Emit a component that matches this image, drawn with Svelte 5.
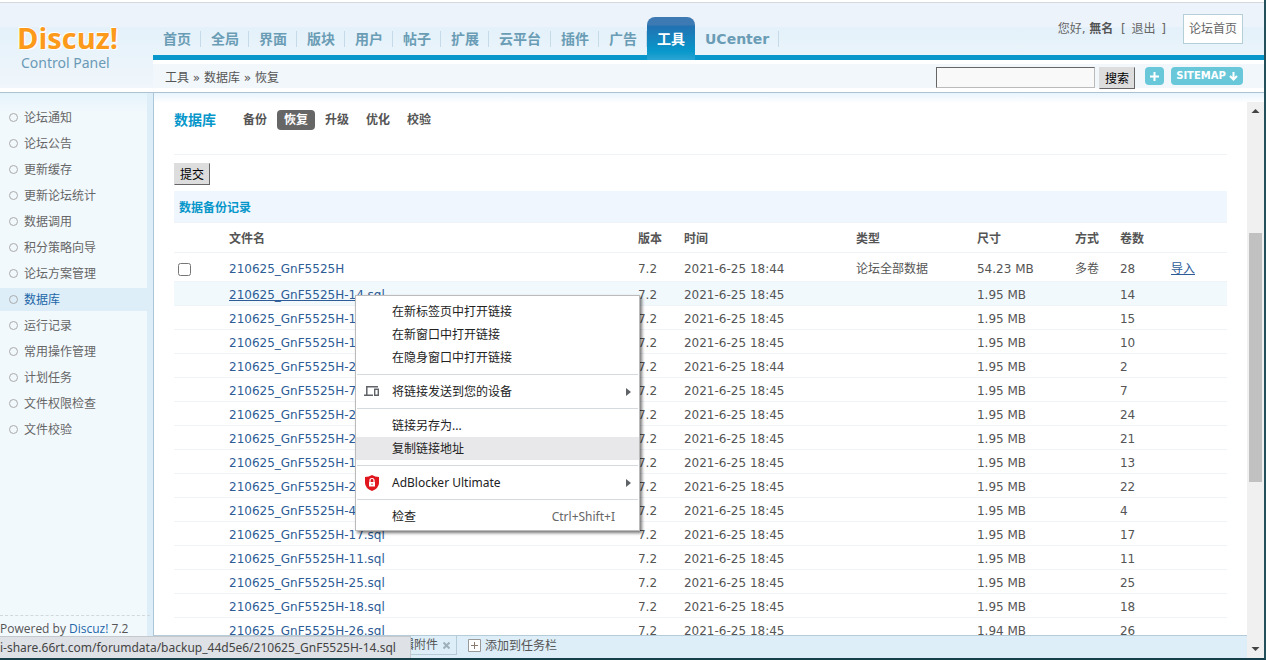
<script>
  const nav = ['首页', '全局', '界面', '版块', '用户', '帖子', '扩展', '云平台', '插件', '广告', '工具', 'UCenter'];
  const side = ['论坛通知', '论坛公告', '更新缓存', '更新论坛统计', '数据调用', '积分策略向导', '论坛方案管理', '数据库', '运行记录', '常用操作管理', '计划任务', '文件权限检查', '文件校验'];
  const tabs = ['备份', '恢复', '升级', '优化', '校验'];
  const rows = [
    [14, '45', '1.95'], [15, '45', '1.95'], [10, '45', '1.95'], [2, '44', '1.95'], [7, '45', '1.95'],
    [24, '45', '1.95'], [21, '45', '1.95'], [13, '45', '1.95'], [22, '45', '1.95'], [4, '45', '1.95'],
    [17, '45', '1.95'], [11, '45', '1.95'], [25, '45', '1.95'], [18, '45', '1.95'], [26, '45', '1.94']
  ];
</script>

<div class="page">
  <header class="top">
    <div class="logo">
      <strong>Discuz!</strong>
      <span>Control Panel</span>
    </div>
    <div class="head">
      <div class="navbar">
        <nav>
          {#each nav as n}<a href="#{n}" class:on={n === '工具'}>{n}</a>{/each}
        </nav>
        <div class="user">
          <p>您好, <b>無名</b> &nbsp;[ <a href="#logout">退出</a> ]</p>
          <a class="home" href="#home">论坛首页</a>
        </div>
      </div>
      <div class="crumbs">
        <p>工具 » 数据库 » 恢复</p>
        <form onsubmit={(e) => e.preventDefault()}>
          <input type="text" aria-label="搜索" />
          <button class="btn">搜索</button>
          <button class="pill plus" type="button" aria-label="添加">
            <svg width="9" height="9" viewBox="0 0 9 9"><path d="M4.500 0V9M0 4.500H9" stroke="#fff" stroke-width="2" /></svg>
          </button>
          <button class="pill map" type="button">SITEMAP
            <svg width="9" height="9" viewBox="0 0 9 9"><path d="M4.500 0V7M1 4L4.500 7.500L8 4" fill="none" stroke="#fff" stroke-width="2" /></svg>
          </button>
        </form>
      </div>
    </div>
  </header>

  <div class="body">
    <aside>
      <ul>
        {#each side as s}<li class:on={s === '数据库'}><a href="#{s}">{s}</a></li>{/each}
      </ul>
      <p class="power">Powered by <a href="#discuz">Discuz!</a> 7.2</p>
    </aside>
    <div class="right">
      <main>
        <div class="tabs">
          <h1>数据库</h1>
          {#each tabs as t}<a href="#{t}" class:on={t === '恢复'}>{t}</a>{/each}
        </div>
        <button class="btn submit">提交</button>
        <table>
          <colgroup>
            <col class="c-check" /><col /><col class="c-ver" /><col class="c-time" /><col class="c-type" />
            <col class="c-size" /><col class="c-way" /><col class="c-vol" /><col class="c-act" />
          </colgroup>
          <thead>
            <tr class="title"><th colspan="9">数据备份记录</th></tr>
            <tr class="cols"><th></th><th>文件名</th><th>版本</th><th>时间</th><th>类型</th><th>尺寸</th><th>方式</th><th>卷数</th><th></th></tr>
          </thead>
          <tbody>
            <tr class="first">
              <td><input type="checkbox" aria-label="210625_GnF5525H" /></td>
              <td><a href="#file">210625_GnF5525H</a></td><td>7.2</td><td>2021-6-25 18:44</td><td>论坛全部数据</td>
              <td>54.23 MB</td><td>多卷</td><td>28</td><td><a class="ul" href="#import">导入</a></td>
            </tr>
            {#each rows as [n, min, size], i}
              <tr class:hot={i === 0}>
                <td></td><td><a class:ul={i === 0} href="#{n}">210625_GnF5525H-{n}.sql</a></td><td>7.2</td>
                <td>2021-6-25 18:{min}</td><td></td><td>{size} MB</td><td></td><td>{n}</td><td></td>
              </tr>
            {/each}
          </tbody>
        </table>
      </main>
      <footer>
        <div class="task"><span>编辑附件</span><svg width="7" height="7" viewBox="0 0 7 7"><path d="M0.500 0.500L6.500 6.500M6.500 0.500L0.500 6.500" stroke="#9db0bb" stroke-width="2" /></svg></div>
        <a class="add" href="#add">
          <svg width="13" height="13" viewBox="0 0 13 13"><path d="M.5 .5H12.500V12.500H.5Z" fill="#fff" stroke="#999" /><path d="M6.500 3V10M3 6.500H10" stroke="#8a7a70" /></svg>
          添加到任务栏
        </a>
      </footer>
    </div>
    <div class="scroll">
      <svg width="17" height="17" viewBox="0 0 17 17"><path d="M4.500 11L8.500 7L12.500 11Z" fill="#444" /></svg>
      <div class="track"><i></i></div>
      <svg width="17" height="17" viewBox="0 0 17 17"><path d="M4.500 6L8.500 10L12.500 6Z" fill="#444" /></svg>
    </div>
  </div>

  <div class="menu" role="menu">
    <button role="menuitem">在新标签页中打开链接</button>
    <button role="menuitem">在新窗口中打开链接</button>
    <button role="menuitem">在隐身窗口中打开链接</button>
    <hr />
    <button role="menuitem">
      <svg class="ico" width="16" height="11" viewBox="0 0 16 11"><path d="M14 .8H2.800V8.500M0 9.300H9" fill="none" stroke="#5f6368" stroke-width="1.500" /><path d="M10.700 3.200H14.300V9.300H10.700Z" fill="none" stroke="#5f6368" stroke-width="1.400" /></svg>
      将链接发送到您的设备
      <svg class="arr" width="6" height="8" viewBox="0 0 6 8"><path d="M0 0L5 4L0 8Z" fill="#5f6368" /></svg>
    </button>
    <hr />
    <button role="menuitem">链接另存为...</button>
    <button role="menuitem" class="on">复制链接地址</button>
    <hr />
    <button role="menuitem">
      <svg class="ico" width="16" height="16" viewBox="0 0 16 16"><path d="M8 0Q11 2 15 2V8Q15 13 8 16Q1 13 1 8V2Q5 2 8 0Z" fill="#e0151e" /><path d="M5 7H11V11.500H5Z" fill="#fff" /><path d="M6 7V5.500Q6 3.500 8 3.500Q10 3.500 10 5.500V7" fill="none" stroke="#fff" stroke-width="1.200" /><path d="M8 8.500V10" stroke="#db1820" /></svg>
      AdBlocker Ultimate
      <svg class="arr" width="6" height="8" viewBox="0 0 6 8"><path d="M0 0L5 4L0 8Z" fill="#5f6368" /></svg>
    </button>
    <hr />
    <button role="menuitem">检查 <kbd>Ctrl+Shift+I</kbd></button>
  </div>
  <div class="status">i-share.66rt.com/forumdata/backup_44d5e6/210625_GnF5525H-14.sql</div>
</div>

<style>
  :global(*) { box-sizing: border-box; }
  :global(body) { margin: 0; overflow: hidden; }
  .page { position: relative; height: 100vh; display: flex; flex-direction: column; overflow: hidden; background: #fff; border-right: 2px solid #24505c; border-bottom: 2px solid #173f4a; font: 12px/18px "DejaVu Sans", "Noto Sans CJK SC", sans-serif; color: #555; }
  p, ul, h1 { margin: 0; padding: 0; }
  a { color: inherit; text-decoration: none; }
  .top { display: flex; flex: none; margin-top: 2px; border-top: 1px solid #d5d9dd; border-bottom: 1px solid #adc3d1; background: linear-gradient(#edf3fa 0 24px, #e4f1fa 24px, #f0f6fb 85px, #fff 85px); }
  .logo { width: 153px; flex: none; display: flex; flex-direction: column; align-items: flex-start; padding: 17px 0 0 17px; }
  .logo strong { font: bold 29px/35px "Open Sans", sans-serif; color: #fc9a1b; text-shadow: 0 0 2px #fff, 1px 1px 0 #fff, -1px -1px 0 #fff; }
  .logo span { padding-left: 4px; font: 14px/16px "Noto Sans", sans-serif; color: #6a9ab5; }
  .head { flex: 1; min-width: 0; }
  .navbar { display: flex; justify-content: space-between; height: 57px; border-bottom: 5px solid #0797ca; }
  nav { display: flex; height: 57px; padding-top: 14px; flex: none; }
  nav a { position: relative; height: 43px; padding: 0 10px; font-size: 14px; line-height: 44px; font-weight: bold; color: #6a9db5; }
  nav a::after { content: ""; position: absolute; right: 0; top: 14px; height: 16px; border-right: 1px solid #c6dbe8; }
  nav a.on { color: #fff; border-radius: 8px 8px 0 0; background: linear-gradient(#3d7ab4 0 8px, #2272b2 9px, #0797ca 34px, #2aa5d3); }
  nav a.on::after { display: none; }
  .user { display: flex; gap: 17px; padding: 11px 21px 0 0; color: #666; }
  .user p { line-height: 31px; white-space: nowrap; }
  .user b { color: #555; }
  .user p a { padding: 0 2px; }
  .home { height: 30px; padding: 0 5px; line-height: 29px; border: 1px solid #b5cfd9; background: #fff; }
  .crumbs { display: flex; justify-content: space-between; align-items: flex-start; height: 32px; padding: 0 21px 0 12px; border: solid #fff; border-width: 4px 0; background: #f2f7fb; }
  .crumbs p { line-height: 28px; }
  form { display: flex; align-items: flex-start; padding-top: 3px; }
  form input { width: 159px; height: 21px; border: 1px solid #bbb; border-top-color: #666; border-left-color: #666; background: #f9f9f9; margin-right: 4px; }
  .btn { height: 22px; padding: 0 5px; border: 1px solid #ddd; border-right-color: #666; border-bottom-color: #666; background: #ddd; color: #000; font: 12px/22px "DejaVu Sans", "Noto Sans CJK SC", sans-serif; }
  .pill { display: flex; align-items: center; justify-content: center; gap: 3px; height: 18px; padding: 0 5px; border: 0; border-radius: 4px; background: #68c8da; color: #fff; font: bold 10px/18px "DejaVu Sans", sans-serif; }
  .plus { margin: 0 7px 0 10px; }
  .map { width: 72px; }
  .body { flex: 1; min-height: 0; display: flex; background: linear-gradient(#e8f4fc, #fff 10px); }
  aside { width: 154px; flex: none; display: flex; flex-direction: column; justify-content: space-between; border-right: 1px solid #a9c7d8; background: linear-gradient(90deg, transparent 147px, #ddeef8 147px), linear-gradient(#e4f3fb, #f2f9fd 20px); }
  ul { list-style: none; padding-top: 13px; }
  li { position: relative; width: 147px; height: 23px; margin-bottom: 3px; padding-left: 24px; line-height: 25px; color: #666; }
  li::before { content: ""; position: absolute; left: 9px; top: 7px; width: 7px; height: 7px; border: 1px solid #aaa; border-radius: 50%; }
  li.on { background: #ddeef8; color: #2366a8; }
  .power { height: 43px; width: 150px; padding-top: 4px; border-top: 1px dashed #d0d9de; font-family: "Open Sans", sans-serif; white-space: nowrap; }
  .power a { color: #2366a8; }
  .right { flex: 1; min-width: 0; display: flex; flex-direction: column; }
  main { flex: 1; min-height: 0; overflow: hidden; padding: 17px 20px 0; }
  .tabs { display: flex; align-items: flex-start; gap: 3px; height: 45px; border-bottom: 1px solid #f0f3f5; }
  h1 { margin-right: 17px; font-size: 14px; line-height: 20px; color: #0797ca; }
  .tabs a { height: 20px; padding: 0 7px; line-height: 21px; font-weight: bold; }
  .tabs a.on { background: #666; color: #fff; border-radius: 4px; }
  .submit { display: block; margin: 8px 0 6px; }
  table { width: 100%; table-layout: fixed; border-collapse: separate; border-spacing: 0; }
  .c-check { width: 50px; } .c-ver { width: 46px; } .c-time { width: 172px; } .c-type { width: 121px; }
  .c-size { width: 98px; } .c-way { width: 45px; } .c-vol { width: 51px; } .c-act { width: 61px; }
  th, td { height: 24px; padding: 2px 5px 0; border-bottom: 1px solid #eef4f7; text-align: left; white-space: nowrap; line-height: 18px; }
  .title th { height: 32px; background: #f0f6fd; color: #0797ca; }
  .cols th { height: 30px; padding-top: 3px; }
  .first td { height: 29px; padding-top: 4px; }
  .hot td { background: #f2f9fd; }
  td a { color: #2d5c96; }
  .ul { text-decoration: underline; }
  td input { display: block; width: 13px; height: 13px; margin: 0 -1px; }
  footer { height: 23px; flex: none; display: flex; align-items: flex-start; gap: 11px; padding-left: 228px; border-top: 1px solid #b5cbd7; background: #ddeef8; }
  .task { display: flex; justify-content: flex-end; align-items: center; gap: 5px; width: 75px; height: 19px; padding-right: 6px; border: solid #b5cbd7; border-width: 0 1px 1px; white-space: nowrap; }
  .add { display: flex; align-items: center; gap: 4px; height: 19px; }
  .scroll { width: 17px; flex: none; display: flex; flex-direction: column; margin-top: 9px; background: #f0f0f0; }
  .scroll svg { display: block; flex: none; }
  .track { flex: 1; padding-top: 20%; display: flex; flex-direction: column; }
  .track::before { content: ""; flex: 111; }
  .track::after { content: ""; flex: 159; }
  .track i { flex: 249; margin: 0 2px; background: #c1c1c1; }
  .menu { position: absolute; left: 355px; top: 295px; width: 285px; padding: 4px 0 2px; border: 1px solid #bbb; background: #fff; box-shadow: 2px 2px 3px #0008; }
  .menu button { position: relative; display: flex; align-items: center; width: 100%; height: 23px; padding: 0 24px 0 36px; border: 0; background: none; color: #222; font: 12px/22px "Noto Sans", "Noto Sans CJK SC", sans-serif; }
  .menu button.on { background: #e8e8ea; }
  hr { height: 1px; margin: 5px 1px; border: 0; background: #d5dade; }
  .ico { position: absolute; left: 8px; }
  .arr { position: absolute; right: 7px; }
  kbd { margin-left: auto; font: inherit; color: #666; }
  .status { position: absolute; left: 0; bottom: 0; width: 411px; height: 22px; overflow: hidden; border: solid #c5c8cc; border-width: 1px 1px 0 0; background: #dee1e6; color: #444; font: 12px/22px "Noto Sans", sans-serif; white-space: nowrap; }
</style>
